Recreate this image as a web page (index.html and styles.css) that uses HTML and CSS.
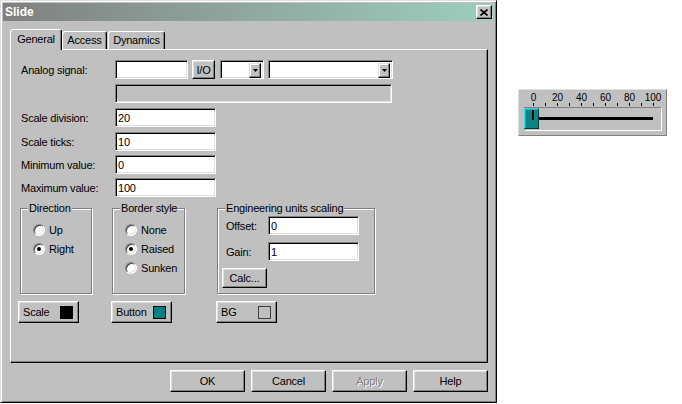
FILE: index.html
```html
<!DOCTYPE html>
<html>
<head>
<meta charset="utf-8">
<link rel="stylesheet" href="styles.css">
</head>
<body>
<div class="dialog">
  <div class="titlebar">
    <span class="title">Slide</span>
    <span class="close"><svg width="8" height="7" viewBox="0 0 8 7"><path d="M0.5 0.5L7.5 6.5M7.5 0.5L0.5 6.5" stroke="#000" stroke-width="1.6" fill="none"/></svg></span>
  </div>
  <div class="dlg-body">
    <div class="tabs">
      <div class="tab active t-gen">General</div>
      <div class="tab t-acc">Access</div>
      <div class="tab t-dyn">Dynamics</div>
    </div>
    <div class="panel">
      <div class="row">
        <span class="lbl">Analog signal:</span>
        <div class="field w-sig"></div>
        <div class="btn io">I/O</div>
        <div class="combo w-c1"><span class="cb"><svg width="5" height="3" viewBox="0 0 5 3"><path d="M0 0H5L2.5 3Z" fill="#000"/></svg></span></div>
        <div class="combo w-c2"><span class="cb"><svg width="5" height="3" viewBox="0 0 5 3"><path d="M0 0H5L2.5 3Z" fill="#000"/></svg></span></div>
      </div>
      <div class="row gap5">
        <span class="lbl"></span>
        <div class="field disabled w-long"></div>
      </div>
      <div class="row gap5">
        <span class="lbl">Scale division:</span>
        <div class="field w-num">20</div>
      </div>
      <div class="row gap5">
        <span class="lbl">Scale ticks:</span>
        <div class="field w-num">10</div>
      </div>
      <div class="row gap4">
        <span class="lbl">Minimum value:</span>
        <div class="field w-num">0</div>
      </div>
      <div class="row gap4">
        <span class="lbl">Maximum value:</span>
        <div class="field w-num">100</div>
      </div>

      <div class="groups">
        <fieldset class="grp g-dir">
          <legend>Direction</legend>
          <div class="radios">
            <div class="radio"><span class="rb"></span>Up</div>
            <div class="radio"><span class="rb on"></span>Right</div>
          </div>
        </fieldset>
        <fieldset class="grp g-bor">
          <legend>Border style</legend>
          <div class="radios">
            <div class="radio"><span class="rb"></span>None</div>
            <div class="radio"><span class="rb on"></span>Raised</div>
            <div class="radio"><span class="rb"></span>Sunken</div>
          </div>
        </fieldset>
        <fieldset class="grp g-eng">
          <legend>Engineering units scaling</legend>
          <div class="eng">
            <div class="erow first"><span class="elbl">Offset:</span><div class="field w-eng">0</div></div>
            <div class="erow"><span class="elbl">Gain:</span><div class="field w-eng">1</div></div>
            <div class="btn calc">Calc...</div>
          </div>
        </fieldset>
      </div>

      <div class="colors">
        <div class="btn colbtn c-scale"><span>Scale</span><span class="sw sw-black"></span></div>
        <div class="btn colbtn c-button"><span>Button</span><span class="sw sw-teal"></span></div>
        <div class="btn colbtn c-bg"><span>BG</span><span class="sw sw-gray"></span></div>
      </div>
    </div>
    <div class="actions">
      <div class="btn act">OK</div>
      <div class="btn act">Cancel</div>
      <div class="btn act disabled-txt">Apply</div>
      <div class="btn act">Help</div>
    </div>
  </div>
</div>

<div class="widget">
  <svg class="scale" width="147" height="17" viewBox="0 0 147 17">
    <g fill="#000">
      <rect x="14" y="13" width="1" height="3"/>
      <rect x="26" y="13" width="1" height="3"/>
      <rect x="38" y="13" width="1" height="3"/>
      <rect x="50" y="13" width="1" height="3"/>
      <rect x="62" y="13" width="1" height="3"/>
      <rect x="74" y="13" width="1" height="3"/>
      <rect x="86" y="13" width="1" height="3"/>
      <rect x="98" y="13" width="1" height="3"/>
      <rect x="110" y="13" width="1" height="3"/>
      <rect x="122" y="13" width="1" height="3"/>
      <rect x="134" y="13" width="1" height="3"/>
    </g>
    <g class="scale-txt" text-anchor="middle">
      <text x="14.5" y="11">0</text>
      <text x="38.5" y="11">20</text>
      <text x="62.5" y="11">40</text>
      <text x="86.5" y="11">60</text>
      <text x="110.5" y="11">80</text>
      <text x="134" y="11">100</text>
    </g>
  </svg>
  <div class="track">
    <div class="thumb"></div>
    <div class="bar"></div>
  </div>
</div>
</body>
</html>
```

FILE: styles.css
```css
* { box-sizing: border-box; }

body {
  margin: 0;
  background: #fff;
  font-family: "Liberation Sans", Arial, sans-serif;
  font-size: 11px;
  letter-spacing: -0.2px;
  color: #000;
  display: flex;
  align-items: flex-start;
}

.dialog {
  width: 497px;
  height: 403px;
  background: #c0c0c0;
  border: 1px solid;
  border-color: #dfdfdf #000 #000 #dfdfdf;
  box-shadow: inset 1px 1px #fff, inset -1px -1px #808080;
  padding: 2px;
  display: flex;
  flex-direction: column;
}

.titlebar {
  height: 18px;
  background: linear-gradient(90deg, #808080 0%, #8fa8a0 50%, #9ccfbd 100%);
  display: flex;
  align-items: center;
  justify-content: space-between;
  padding: 0 2px;
}

.title {
  color: #fff;
  font-weight: bold;
  font-size: 12px;
  letter-spacing: 0;
}

.close {
  width: 16px;
  height: 14px;
  background: #c0c0c0;
  border: 1px solid;
  border-color: #fff #000 #000 #fff;
  box-shadow: inset -1px -1px #808080, inset 1px 1px #dfdfdf;
  display: flex;
  align-items: center;
  justify-content: center;
}

.dlg-body {
  padding: 8px 0 0 7px;
}

.tabs {
  display: flex;
  align-items: flex-end;
  height: 20px;
}

.tab {
  height: 18px;
  background: #c0c0c0;
  border: 1px solid;
  border-bottom: none;
  border-color: #fff #000 #000 #fff;
  border-radius: 3px 3px 0 0;
  box-shadow: inset -1px 0 #808080;
  display: flex;
  align-items: center;
  justify-content: center;
  padding-bottom: 1px;
}

.tab.active {
  height: 21px;
  margin-bottom: -1px;
  position: relative;
  z-index: 1;
  padding-bottom: 3px;
}

.t-gen { width: 52px; }
.t-acc { width: 45px; }
.t-dyn { width: 57px; margin-left: 1px; }

.panel {
  width: 478px;
  height: 314px;
  border: 1px solid;
  border-color: #fff #000 #000 #fff;
  box-shadow: inset -1px -1px #808080;
  padding: 10px 10px 0 10px;
}

.row {
  display: flex;
  align-items: center;
  height: 19px;
}
.row.gap5 { margin-top: 5px; }
.row.gap4 { margin-top: 4px; }

.lbl {
  width: 94px;
  flex: none;
}

.field {
  height: 19px;
  background: #fff;
  border: 1px solid;
  border-color: #808080 #fff #fff #808080;
  box-shadow: inset 1px 1px #000, inset -1px -1px #dfdfdf;
  padding: 0 2px;
  display: flex;
  align-items: center;
  flex: none;
}
.field.disabled { background: #c0c0c0; }

.w-sig { width: 73px; }
.w-long { width: 277px; }
.w-num { width: 101px; }
.w-eng { width: 91px; }

.btn {
  background: #c0c0c0;
  border: 1px solid;
  border-color: #fff #000 #000 #fff;
  box-shadow: inset -1px -1px #808080, inset 1px 1px #dfdfdf;
  display: flex;
  align-items: center;
  justify-content: center;
  flex: none;
}

.io {
  width: 23px;
  height: 19px;
  margin-left: 4px;
}

.combo {
  height: 19px;
  background: #fff;
  border: 1px solid;
  border-color: #808080 #fff #fff #808080;
  box-shadow: inset 1px 1px #000, inset -1px -1px #dfdfdf;
  padding: 2px;
  display: flex;
  justify-content: flex-end;
  flex: none;
}
.w-c1 { width: 44px; margin-left: 5px; }
.w-c2 { width: 125px; margin-left: 4px; }

.cb {
  width: 12px;
  height: 15px;
  background: #c0c0c0;
  border: 1px solid;
  border-color: #dfdfdf #000 #000 #dfdfdf;
  box-shadow: inset -1px -1px #808080, inset 1px 1px #fff;
  display: flex;
  align-items: center;
  justify-content: center;
}

.groups {
  display: flex;
  align-items: flex-start;
  margin-top: 5px;
  margin-left: -1px;
}

.grp {
  margin: 0;
  padding: 0;
  min-width: 0;
  height: 92px;
  border: 1px solid #808080;
  box-shadow: 1px 1px #fff, inset 1px 1px #fff;
}

.grp legend {
  padding: 0 1px;
  margin-left: 7px;
  line-height: 13px;
  background: #c0c0c0;
}

.g-dir { width: 72px; }
.g-bor { width: 73px; margin-left: 20px; }
.g-eng { width: 158px; margin-left: 32px; }

.radios {
  padding: 5px 0 0 12px;
}

.radio {
  height: 19px;
  display: flex;
  align-items: center;
  gap: 4px;
}

.rb {
  width: 12px;
  height: 12px;
  border-radius: 50%;
  background: #fff;
  border: 1px solid;
  border-color: #808080 #fff #fff #808080;
  box-shadow: inset 1px 1px #404040, inset -1px -1px #dfdfdf;
  display: flex;
  align-items: center;
  justify-content: center;
  flex: none;
}
.rb.on::after {
  content: "";
  width: 4px;
  height: 4px;
  border-radius: 50%;
  background: #000;
}

.eng {
  padding-left: 4px;
}
.erow {
  display: flex;
  align-items: center;
  height: 19px;
  margin-top: 7px;
}
.erow.first { margin-top: 1px; }
.elbl {
  width: 46px;
  padding-left: 4px;
  flex: none;
}

.calc {
  width: 45px;
  height: 20px;
  margin-top: 7px;
}

.colors {
  display: flex;
  margin-top: 7px;
  margin-left: -3px;
}

.colbtn {
  width: 61px;
  height: 22px;
  justify-content: space-between;
  padding: 0 5px 0 4px;
}
.c-button { margin-left: 32px; }
.c-bg { margin-left: 44px; }

.sw {
  width: 13px;
  height: 13px;
  border: 1px solid #000;
}
.sw-black { background: #000; }
.sw-teal { background: #008080; }
.sw-gray { background: #c0c0c0; border-color: #404040; }

.actions {
  width: 478px;
  display: flex;
  justify-content: flex-end;
  gap: 6px;
  margin-top: 7px;
}

.act {
  width: 75px;
  height: 22px;
}

.disabled-txt {
  color: #808080;
  text-shadow: 1px 1px #fff;
}

.widget {
  width: 149px;
  height: 47px;
  margin-left: 21px;
  margin-top: 89px;
  background: #c0c0c0;
  border: 1px solid;
  border-color: #dfdfdf #808080 #808080 #dfdfdf;
  flex: none;
}

.scale {
  display: block;
}

.scale-txt {
  font-family: "Liberation Sans", Arial, sans-serif;
  font-size: 10px;
  letter-spacing: 0;
  fill: #000;
}

.track {
  width: 138px;
  height: 24px;
  margin-left: 5px;
  border: 1px solid;
  border-color: #808080 #fff #fff #808080;
  display: flex;
  align-items: flex-start;
}

.thumb {
  width: 15px;
  height: 21px;
  margin-left: -1px;
  background: #0a8585;
  border: 1px solid;
  border-color: #40d8d8 #003c3c #003c3c #40d8d8;
  box-shadow: inset 1px 1px #20b0b0;
  display: flex;
  padding: 1px 0 0 7px;
  flex: none;
}
.thumb::before {
  content: "";
  width: 2px;
  height: 10px;
  background: #000;
}

.bar {
  width: 114px;
  height: 3px;
  margin-top: 9px;
  background: #000;
  flex: none;
}
```
